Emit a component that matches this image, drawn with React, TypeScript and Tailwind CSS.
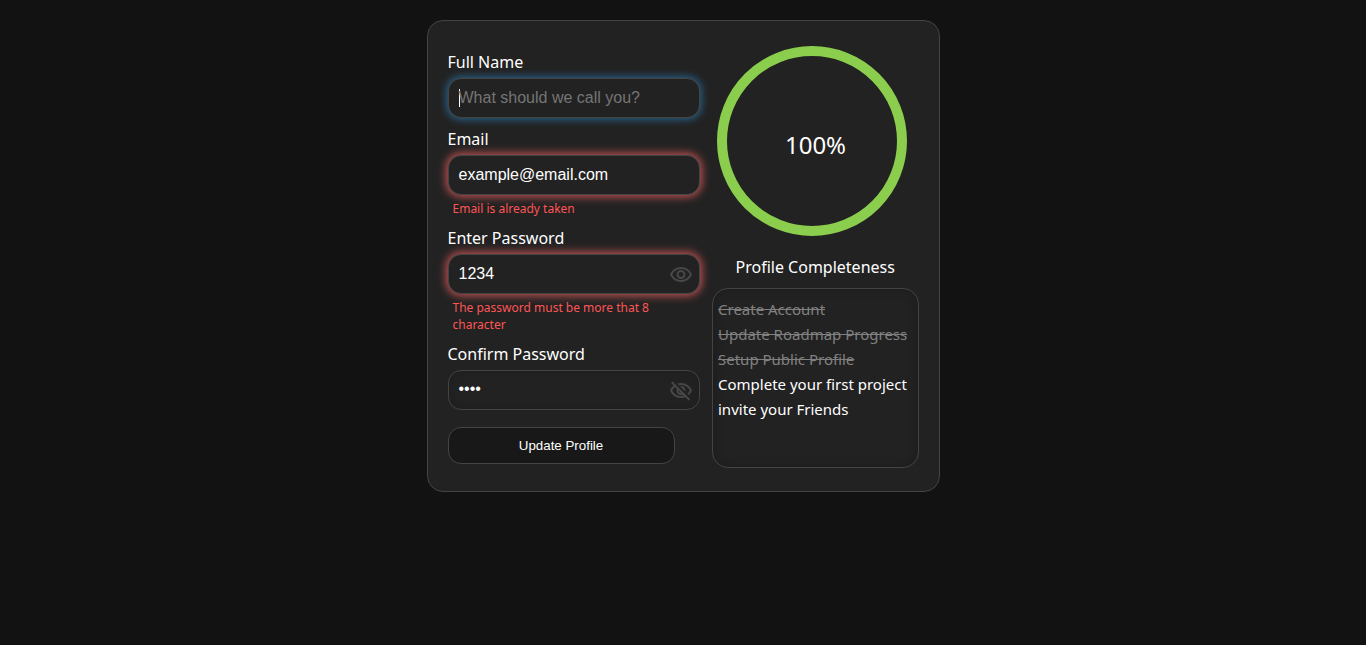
import type { ReactNode } from "react";
import { MdOutlineVisibility, MdOutlineVisibilityOff } from "react-icons/md";

const fieldBase =
  "flex h-10 w-[252px] items-center justify-between rounded-[13px] border border-[#444] bg-[#222] pr-[6px] pl-[10px] font-['Liberation_Sans',sans-serif] text-base leading-[18px]";

const glow = {
  focus: "shadow-[0_0_8px_1px_#2a6a98]",
  error: "shadow-[0_0_8px_2px_#c05252]",
  none: "shadow-[inset_0_0_10px_#1e1e1e]",
};

function Field({ label, state, children }: { label: string; state: keyof typeof glow; children: ReactNode }) {
  return (
    <div>
      <div className="h-[27px] text-base leading-[22px]">{label}</div>
      <div className={`${fieldBase} ${glow[state]}`}>{children}</div>
    </div>
  );
}

const tasks = [
  { text: "Create Account", done: true },
  { text: "Update Roadmap Progress", done: true },
  { text: "Setup Public Profile", done: true },
  { text: "Complete your first project", done: false },
  { text: "invite your Friends", done: false },
];

export default function App() {
  return (
    <div className="min-h-screen bg-[#121212] pt-5 font-['Noto_Sans',sans-serif] text-white">
      <main className="mx-auto flex h-[472px] w-[513px] rounded-[16px] border border-[#444] bg-[#222]">
        <form className="w-[284px] pt-[30px] pl-5">
          <Field label="Full Name" state="focus">
            <span className="flex items-center text-[#757575]">
              <span className="-mr-px h-[18px] w-px bg-white" />
              What should we call you?
            </span>
          </Field>
          <div className="mt-[10px]">
            <Field label="Email" state="error">
              example@email.com
            </Field>
          </div>
          <p className="mt-[5px] h-[17px] pl-[5px] text-[12px] leading-[17px] text-[#ff5555]">Email is already taken</p>
          <div className="mt-[10px]">
            <Field label="Enter Password" state="error">
              1234
              <MdOutlineVisibility size={24} className="mt-[2px] text-[#484848]" />
            </Field>
          </div>
          <p className="mt-[5px] h-[34px] w-[227px] pl-[5px] text-[12px] leading-[17px] text-[#ff5555]">
            The password must be more that 8 character
          </p>
          <div className="mt-[10px]">
            <Field label="Confirm Password" state="none">
              <span className="pb-[2px]">••••</span>
              <MdOutlineVisibilityOff size={24} className="mt-[2px] text-[#484848]" />
            </Field>
          </div>
          <button
            type="button"
            className="mt-[17px] h-[37px] w-[227px] rounded-[13px] border border-[#444] bg-[#181818] font-['Liberation_Sans',sans-serif] text-[13.333px] leading-[15px]"
          >
            Update Profile
          </button>
        </form>
        <section className="flex w-[207px] flex-col pt-[25px]">
          <div className="ml-[5px] flex h-[190px] w-[190px] items-center justify-center rounded-full border-[10px] border-[#8bce4e] pt-2 pl-2 text-2xl">
            100%
          </div>
          <h2 className="mt-5 ml-6 h-[22px] text-base leading-[22px]">Profile Completeness</h2>
          <ul className="mt-[10px] h-[180px] rounded-[16px] border border-[#444] px-[5.5px] pt-2 text-[15px] leading-[25px] whitespace-nowrap shadow-[inset_0_0_10px_#1c1c1c]">
            {tasks.map((t) => (
              <li key={t.text} className={t.done ? "text-[#808080] line-through" : ""}>
                {t.text}
              </li>
            ))}
          </ul>
        </section>
      </main>
    </div>
  );
}
